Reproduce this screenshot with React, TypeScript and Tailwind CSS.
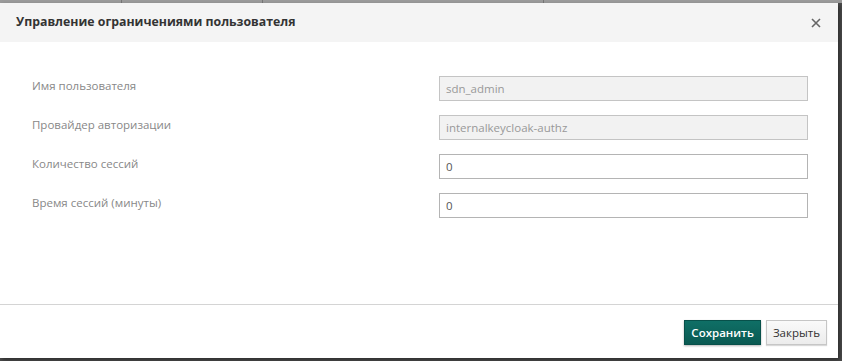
import React from 'react';

const fields = [
  { label: 'Имя пользователя', value: 'sdn_admin', disabled: true },
  { label: 'Провайдер авторизации', value: 'internalkeycloak-authz', disabled: true },
  { label: 'Количество сессий', value: '0', disabled: false },
  { label: 'Время сессий (минуты)', value: '0', disabled: false },
];

export default function App() {
  return (
    <div
      className="w-[842px] h-[361px] bg-[#4b4b4b] overflow-hidden flex flex-col"
      style={{ fontFamily: '"Open Sans", "Noto Sans", sans-serif' }}
    >
      {/* table header peeking behind the backdrop */}
      <div className="h-[3px] flex bg-[#9b9b9b] shrink-0">
        <div className="w-[122px] border-r border-[#777]" />
        <div className="w-[141px] border-r border-[#777]" />
        <div className="w-[281px] border-r border-[#777]" />
      </div>

      <div className="w-[838px] h-[355px] bg-white flex flex-col shadow-[2px_2px_4px_rgba(0,0,0,0.4)]">
        <div className="h-[39px] bg-[#f4f4f4] flex items-center justify-between pl-4 pr-[17px] shrink-0">
          <h3 className="text-[12.3px] font-bold text-[#333]">Управление ограничениями пользователя</h3>
          <button className="text-[#666] leading-none">
            <svg width="10" height="10" viewBox="0 0 10 10">
              <path d="M1 1L9 9M9 1L1 9" stroke="#666" strokeWidth="1.6" />
            </svg>
          </button>
        </div>

        <div className="flex-1 pt-[34px] pl-8 pr-[30px] flex flex-col gap-[14px]">
          {fields.map((f) => (
            <div key={f.label} className="flex items-center h-[25px]">
              <label className="flex-1 text-[11.5px] text-[#888] -mt-[6px]">{f.label}</label>
              <input
                type="text"
                readOnly
                value={f.value}
                className={`w-[369px] h-[25px] px-[6px] text-[11.5px] outline-none border ${
                  f.disabled
                    ? 'bg-[#f2f2f2] border-[#c4c4c4] text-[#999]'
                    : 'bg-white border-[#b4b4b4] text-[#555]'
                }`}
              />
            </div>
          ))}
        </div>

        <div className="h-[54px] border-t border-[#d4d4d4] flex items-center justify-end gap-[5px] pr-[11px] pt-[2px] shrink-0">
          <button className="h-[25px] px-[6px] bg-gradient-to-b from-[#0f6f66] to-[#0a5a52] border border-[#07504a] text-white text-[11.5px] font-semibold shadow-[0_1px_2px_rgba(0,0,0,0.3)]">
            Сохранить
          </button>
          <button className="h-[25px] px-[6px] bg-gradient-to-b from-[#fafafa] to-[#ececec] border border-[#c6c6c6] text-[#333] text-[11.5px] shadow-[0_1px_1px_rgba(0,0,0,0.15)]">
            Закрыть
          </button>
        </div>
      </div>
    </div>
  );
}
